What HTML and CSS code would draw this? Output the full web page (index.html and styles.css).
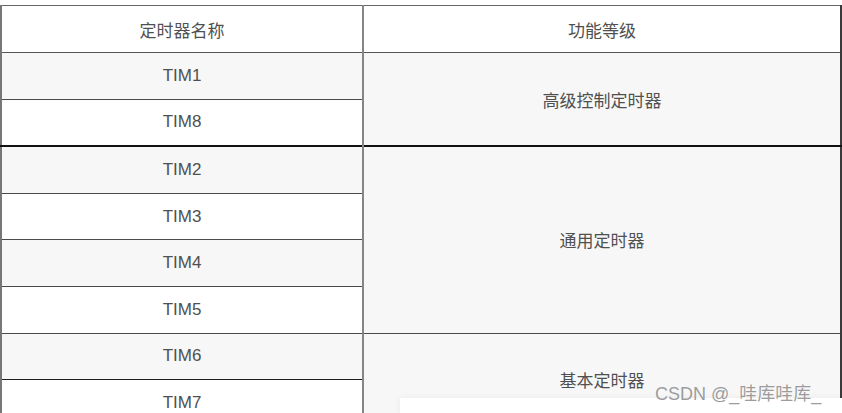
FILE: index.html
```html
<!DOCTYPE html>
<html lang="zh-CN">
<head>
<meta charset="utf-8">
<title>定时器</title>
<link rel="stylesheet" href="styles.css">
</head>
<body>
<div class="page">
  <table class="timers">
    <colgroup>
      <col class="c-name">
      <col class="c-level">
    </colgroup>
    <thead>
      <tr><th>定时器名称</th><th>功能等级</th></tr>
    </thead>
    <tbody>
      <tr class="odd"><td>TIM1</td><td rowspan="2" class="merged">高级控制定时器</td></tr>
      <tr class="even"><td>TIM8</td></tr>
      <tr class="odd group"><td>TIM2</td><td rowspan="4" class="merged">通用定时器</td></tr>
      <tr class="even"><td>TIM3</td></tr>
      <tr class="odd"><td>TIM4</td></tr>
      <tr class="even"><td>TIM5</td></tr>
      <tr class="odd dark"><td>TIM6</td><td rowspan="2" class="merged">基本定时器</td></tr>
      <tr class="even dark"><td>TIM7</td></tr>
    </tbody>
  </table>
  <div class="footer-box"></div>
  <div class="watermark">CSDN @_哇库哇库_</div>
</div>
</body>
</html>
```

FILE: styles.css
```css
html, body {
  margin: 0;
  padding: 0;
  background: #ffffff;
  overflow: hidden;
}
.page {
  position: relative;
  width: 842px;
  height: 413px;
  overflow: hidden;
  padding-top: 5px;
  box-sizing: border-box;
}
.timers {
  border-collapse: collapse;
  width: 840px;
  table-layout: fixed;
  font-family: "Liberation Sans", "Noto Sans CJK SC", sans-serif;
  font-size: 17px;
  color: #505050;
  border-left: 2px solid #777;
  border-right: 2px solid #3a3a3a;
  border-top: 1px solid #666;
}
.c-name { width: 362px; }
.c-level { width: 478px; }
.timers th,
.timers td {
  height: 46px;
  padding: 0;
  text-align: center;
  vertical-align: middle;
  font-weight: normal;
  border-bottom: 1px solid #4a4a4a;
  border-right: 2px solid #858585;
}
.timers tbody td { height: 45.6px; }
.timers th {
  background: #ffffff;
  border-bottom: 1px solid #555;
}
.timers th:last-child,
.timers td.merged {
  border-right: none;
}
.odd td { background: #f7f7f7; }
.even td { background: #ffffff; }
.timers td.merged { background: #f7f7f7; }
.group td { border-top: 2px solid #111; }
.dark td { border-bottom-color: #1e1e1e; }
.footer-box {
  position: absolute;
  left: 400px;
  top: 398px;
  width: 442px;
  height: 15px;
  background: #ffffff;
  box-shadow: 0 0 6px rgba(0, 0, 0, 0.06);
}
.watermark {
  position: absolute;
  left: 655px;
  top: 383px;
  font-family: "Liberation Sans", "Noto Sans CJK SC", sans-serif;
  font-size: 18px;
  line-height: 22px;
  color: rgba(150, 150, 150, 0.95);
  white-space: nowrap;
}
```
